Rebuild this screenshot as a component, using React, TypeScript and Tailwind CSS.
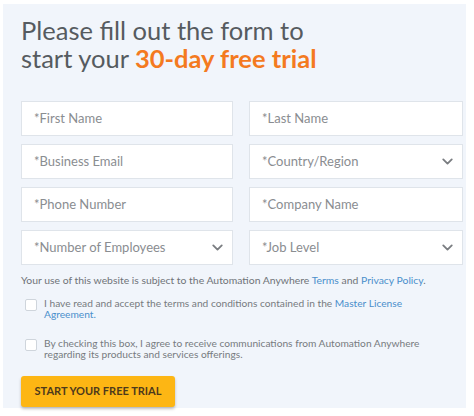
import { ChevronDown } from 'lucide-react';

const fields = [
  { label: '*First Name' },
  { label: '*Last Name' },
  { label: '*Business Email' },
  { label: '*Country/Region', select: true },
  { label: '*Phone Number' },
  { label: '*Company Name' },
  { label: '*Number of Employees', select: true },
  { label: '*Job Level', select: true },
];

function Field({ label, select }: { label: string; select?: boolean }) {
  return (
    <div className="h-[35px] bg-white border border-[#dfe4ea] flex items-center justify-between pl-[12px] pr-[6px]">
      <span className="text-[13px] text-[#8a8d91]">{label}</span>
      {select && <ChevronDown size={17} strokeWidth={2.6} className="text-[#7a7d81]" />}
    </div>
  );
}

function Checkbox({ children }: { children: React.ReactNode }) {
  return (
    <div className="flex items-start gap-[7px] pl-[4px]">
      <div className="mt-[1px] w-[12px] h-[12px] shrink-0 bg-white border border-[#cfd5dc] rounded-[2px]" />
      <p className="text-[10.2px] leading-[11px] text-[#777b80]">{children}</p>
    </div>
  );
}

export default function App() {
  return (
    <div className="w-[474px] h-[416px] bg-white pt-[4px] pl-[3px]" style={{ fontFamily: 'Lato, "Open Sans", sans-serif' }}>
      <div className="w-[463px] h-[404px] bg-[#f1f5fb] pl-[18px] pr-[2px] pt-[12px]">
        <h1 className="text-[25.5px] leading-[28px] text-[#565b60] font-normal">
          Please fill out the form to
          <br />
          start your <span className="text-[#f47a1f] font-bold">30-day free trial</span>
        </h1>

        <div className="mt-[29px] grid grid-cols-[212px_214px] gap-x-[16px] gap-y-[8px]">
          {fields.map((f) => (
            <Field key={f.label} label={f.label} select={f.select} />
          ))}
        </div>

        <p className="mt-[9px] text-[10.4px] leading-[12px] text-[#6f7378]">
          Your use of this website is subject to the Automation Anywhere{' '}
          <span className="text-[#4a8fcb]">Terms</span> and{' '}
          <span className="text-[#4a8fcb]">Privacy Policy</span>.
        </p>

        <div className="mt-[12px] flex flex-col gap-[18px]">
          <Checkbox>
            I have read and accept the terms and conditions contained in the{' '}
            <span className="text-[#4a8fcb]">Master License</span>
            <br />
            <span className="text-[#4a8fcb]">Agreement.</span>
          </Checkbox>
          <Checkbox>
            By checking this box, I agree to receive communications from Automation Anywhere
            <br />
            regarding its products and services offerings.
          </Checkbox>
        </div>

        <button className="mt-[16px] w-[154px] h-[31px] bg-[#fdb614] rounded-[3px] shadow-[0_2px_3px_rgba(0,0,0,0.25)] text-[11px] font-bold text-[#4d3a1c]">
          START YOUR FREE TRIAL
        </button>
      </div>
    </div>
  );
}
